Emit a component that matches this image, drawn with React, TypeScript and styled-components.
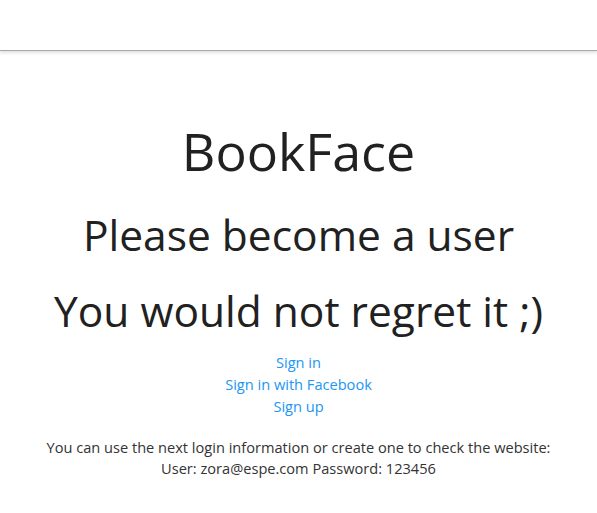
import styled, { createGlobalStyle } from 'styled-components';

const GlobalStyle = createGlobalStyle`
  body {
    margin: 0;
    background: #fff;
    font-family: "Open Sans", "DejaVu Sans", sans-serif;
    color: #212121;
  }
`;

const NavBar = styled.header`
  height: 50px;
  background: #fff;
  border-bottom: 1px solid #a8a8a8;
  box-shadow: 0 2px 3px rgba(0, 0, 0, 0.12);
`;

const Main = styled.main`
  display: flex;
  flex-direction: column;
  align-items: center;
  text-align: center;
  padding-top: 69px;
`;

const Title = styled.h1<{ $size: number; $height: number; $gap: number }>`
  margin: 0 0 ${props => props.$gap}px;
  font-size: ${props => props.$size}px;
  line-height: ${props => props.$height}px;
  font-weight: 400;
  color: #212121;
`;

const LinkList = styled.nav`
  display: flex;
  flex-direction: column;
  align-items: center;
  margin-top: 15px;
`;

const NavLink = styled.a`
  font-size: 14.6px;
  line-height: 22px;
  color: #2196f3;
  text-decoration: none;
  cursor: pointer;
`;

const Info = styled.p`
  margin: 20px 0 0;
  font-size: 14.6px;
  line-height: 21px;
  color: #333;
`;

export default function App() {
  return (
    <>
      <GlobalStyle />
      <NavBar />
      <Main>
        <Title $size={52} $height={62} $gap={28}>BookFace</Title>
        <Title $size={42.5} $height={50} $gap={26}>Please become a user</Title>
        <Title $size={42.5} $height={50} $gap={0}>You would not regret it ;)</Title>
        <LinkList>
          <NavLink>Sign in</NavLink>
          <NavLink>Sign in with Facebook</NavLink>
          <NavLink>Sign up</NavLink>
        </LinkList>
        <Info>
          You can use the next login information or create one to check the website:
          <br />
          User: zora@espe.com Password: 123456
        </Info>
      </Main>
    </>
  );
}
